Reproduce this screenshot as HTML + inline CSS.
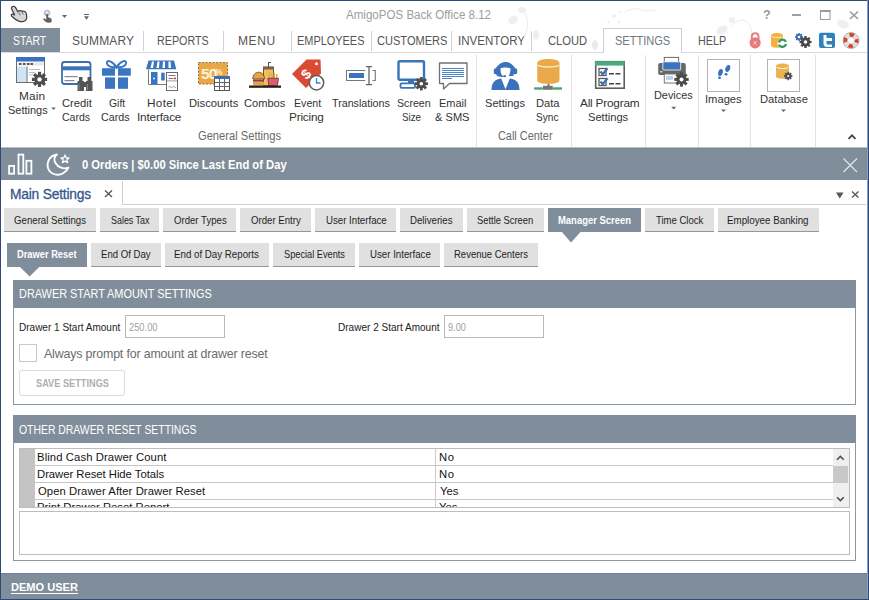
<!DOCTYPE html>
<html><head><meta charset="utf-8">
<style>
*{box-sizing:border-box;margin:0;padding:0}
html,body{width:869px;height:600px;overflow:hidden;background:#fff}
body{position:relative;font-family:"Liberation Sans", sans-serif;color:#222}
.a{position:absolute}
.t{position:absolute;white-space:pre;line-height:1;font-family:"Liberation Sans", sans-serif}
</style></head><body>
<!-- frame -->
<div class="a" style="left:0;top:0;width:869px;height:1px;background:#2e4a78"></div>
<div class="a" style="left:0;top:0;width:1px;height:600px;background:#2e4a78"></div>
<div class="a" style="left:867px;top:0;width:1px;height:600px;background:#8a9cbb"></div><div class="a" style="left:868px;top:0;width:1px;height:600px;background:#2e4a78"></div>
<div class="a" style="left:0;top:599px;width:869px;height:1px;background:#2e4a78"></div>
<!-- tab row -->
<div class="a" style="left:1px;top:28px;width:59px;height:24px;background:#808e9b"></div>
<div class="a" style="left:143px;top:31px;width:1px;height:20px;background:#c9d4e0"></div>
<div class="a" style="left:223px;top:31px;width:1px;height:20px;background:#c9d4e0"></div>
<div class="a" style="left:291px;top:31px;width:1px;height:20px;background:#c9d4e0"></div>
<div class="a" style="left:371px;top:31px;width:1px;height:20px;background:#c9d4e0"></div>
<div class="a" style="left:451px;top:31px;width:1px;height:20px;background:#c9d4e0"></div>
<div class="a" style="left:531px;top:31px;width:1px;height:20px;background:#c9d4e0"></div>
<div class="a" style="left:1px;top:52px;width:866px;height:1px;background:#dadada"></div>
<div class="a" style="left:603px;top:28px;width:79px;height:25px;background:#fff;border:1px solid #c6d1dc;border-bottom:none"></div>
<!-- ribbon separators -->
<div class="a" style="left:476px;top:55px;width:1px;height:92px;background:#e3e3e3"></div>
<div class="a" style="left:571px;top:55px;width:1px;height:92px;background:#e3e3e3"></div>
<div class="a" style="left:645px;top:55px;width:1px;height:92px;background:#e3e3e3"></div>
<div class="a" style="left:698px;top:55px;width:1px;height:92px;background:#e3e3e3"></div>
<div class="a" style="left:750px;top:55px;width:1px;height:92px;background:#e3e3e3"></div>
<div class="a" style="left:815px;top:55px;width:1px;height:92px;background:#e3e3e3"></div>
<div class="a" style="left:707px;top:59px;width:33px;height:33px;border:1px solid #b4b4b4"></div>
<div class="a" style="left:767px;top:59px;width:33px;height:33px;border:1px solid #b4b4b4"></div>
<!-- status bar -->
<div class="a" style="left:1px;top:147px;width:866px;height:1px;background:#b9c0c7"></div><div class="a" style="left:1px;top:148px;width:866px;height:32px;background:#808e9b;border-top:1px solid #7a8692"></div>
<!-- doc tab -->
<div class="a" style="left:122px;top:181px;width:1px;height:24px;background:#cfcfcf"></div>
<div class="a" style="left:122px;top:204px;width:744px;height:1px;background:#cfcfcf"></div>
<!-- buttons row 1 -->
<div class="a" style="left:4px;top:208px;width:92px;height:24px;background:#e0e0e0;border-bottom:1px solid #979797"></div>
<div class="a" style="left:100px;top:208px;width:59px;height:24px;background:#e0e0e0;border-bottom:1px solid #979797"></div>
<div class="a" style="left:163px;top:208px;width:73px;height:24px;background:#e0e0e0;border-bottom:1px solid #979797"></div>
<div class="a" style="left:240px;top:208px;width:71px;height:24px;background:#e0e0e0;border-bottom:1px solid #979797"></div>
<div class="a" style="left:315px;top:208px;width:81px;height:24px;background:#e0e0e0;border-bottom:1px solid #979797"></div>
<div class="a" style="left:400px;top:208px;width:63px;height:24px;background:#e0e0e0;border-bottom:1px solid #979797"></div>
<div class="a" style="left:467px;top:208px;width:77px;height:24px;background:#e0e0e0;border-bottom:1px solid #979797"></div>
<div class="a" style="left:548px;top:208px;width:93px;height:24px;background:#808e9b"></div>
<div class="a" style="left:645px;top:208px;width:69px;height:24px;background:#e0e0e0;border-bottom:1px solid #979797"></div>
<div class="a" style="left:718px;top:208px;width:101px;height:24px;background:#e0e0e0;border-bottom:1px solid #979797"></div>
<!-- buttons row 2 -->
<div class="a" style="left:7px;top:243px;width:80px;height:24px;background:#808e9b"></div>
<div class="a" style="left:91px;top:243px;width:70px;height:24px;background:#e0e0e0;border-bottom:1px solid #979797"></div>
<div class="a" style="left:165px;top:243px;width:104px;height:24px;background:#e0e0e0;border-bottom:1px solid #979797"></div>
<div class="a" style="left:273px;top:243px;width:82px;height:24px;background:#e0e0e0;border-bottom:1px solid #979797"></div>
<div class="a" style="left:359px;top:243px;width:81px;height:24px;background:#e0e0e0;border-bottom:1px solid #979797"></div>
<div class="a" style="left:444px;top:243px;width:94px;height:24px;background:#e0e0e0;border-bottom:1px solid #979797"></div>
<!-- group 1 -->
<div class="a" style="left:13px;top:280px;width:843px;height:28px;background:#808e9b"></div>
<div class="a" style="left:13px;top:307px;width:843px;height:98px;border:1px solid #8c98a3;border-top:none"></div>
<div class="a" style="left:125px;top:315px;width:100px;height:23px;border:1px solid #b8b8b8"></div>
<div class="a" style="left:444px;top:315px;width:100px;height:23px;border:1px solid #b8b8b8"></div>
<div class="a" style="left:19px;top:344px;width:18px;height:18px;border:1px solid #c8c8c8"></div>
<div class="a" style="left:19px;top:370px;width:106px;height:26px;border:1px solid #dcdcdc;border-radius:3px"></div>
<!-- group 2 -->
<div class="a" style="left:13px;top:415px;width:843px;height:28px;background:#808e9b"></div>
<div class="a" style="left:13px;top:442px;width:843px;height:119px;border:1px solid #8c98a3;border-top:none"></div>
<div class="a" style="left:19px;top:448px;width:831px;height:60px;border:1px solid #bdbdbd;overflow:hidden">
  <div class="a" style="left:0;top:0;width:15px;height:58px;background:#c4c4c4"></div>
  <div class="a" style="left:15px;top:16px;width:798px;height:1px;background:#c6c6c6"></div>
  <div class="a" style="left:15px;top:33px;width:798px;height:1px;background:#c6c6c6"></div>
  <div class="a" style="left:15px;top:50px;width:798px;height:1px;background:#c6c6c6"></div>
  <div class="a" style="left:415px;top:0;width:1px;height:58px;background:#cbcbcb"></div>
  <div class="a" style="left:813px;top:0;width:16px;height:58px;background:#efefef"></div>
  <div class="a" style="left:813px;top:17px;width:15px;height:17px;background:#c8c8c8"></div>
  <span class="t" style="left:17px;top:53px;font-size:11.3px;color:#141414">Print Drawer Reset Report</span>
  <span class="t" style="left:419px;top:53px;font-size:11.3px;color:#141414">Yes</span>
</div>
<div class="a" style="left:19px;top:511px;width:831px;height:44px;border:1px solid #bdbdbd"></div>
<!-- bottom bar -->
<div class="a" style="left:1px;top:573px;width:866px;height:26px;background:#808e9b;border-top:1px solid #6a82a8"></div>

<span class="t" style="left:346.4px;top:9px;font-size:12.5px;font-weight:400;color:#9d9d9d;letter-spacing:0px;transform:scaleX(0.9250);transform-origin:0 0;">AmigoPOS Back Office 8.12</span>
<span class="t" style="left:12.64px;top:35px;font-size:12px;font-weight:400;color:#fff;letter-spacing:0px;transform:scaleX(0.8649);transform-origin:0 0;">START</span>
<span class="t" style="left:72px;top:35px;font-size:12px;font-weight:400;color:#555555;letter-spacing:0.167px;">SUMMARY</span>
<span class="t" style="left:157.31px;top:35px;font-size:12px;font-weight:400;color:#555555;letter-spacing:0px;transform:scaleX(0.8947);transform-origin:0 0;">REPORTS</span>
<span class="t" style="left:238px;top:35px;font-size:12px;font-weight:400;color:#555555;letter-spacing:0.6px;">MENU</span>
<span class="t" style="left:297.49px;top:35px;font-size:12px;font-weight:400;color:#555555;letter-spacing:0px;transform:scaleX(0.9110);transform-origin:0 0;">EMPLOYEES</span>
<span class="t" style="left:376.9px;top:35px;font-size:12px;font-weight:400;color:#555555;letter-spacing:0px;transform:scaleX(0.9211);transform-origin:0 0;">CUSTOMERS</span>
<span class="t" style="left:457.74px;top:35px;font-size:12px;font-weight:400;color:#555555;letter-spacing:0px;transform:scaleX(0.9632);transform-origin:0 0;">INVENTORY</span>
<span class="t" style="left:547.6px;top:35px;font-size:12px;font-weight:400;color:#555555;letter-spacing:0px;transform:scaleX(0.9286);transform-origin:0 0;">CLOUD</span>
<span class="t" style="left:614.88px;top:35px;font-size:12px;font-weight:400;color:#6f7780;letter-spacing:0px;transform:scaleX(0.9186);transform-origin:0 0;">SETTINGS</span>
<span class="t" style="left:698.2px;top:35px;font-size:12px;font-weight:400;color:#555555;letter-spacing:0px;transform:scaleX(0.9000);transform-origin:0 0;">HELP</span>
<span class="t" style="left:19px;top:91px;font-size:11.8px;font-weight:400;color:#333;letter-spacing:0.133px;">Main</span>
<span class="t" style="left:7.6px;top:105px;font-size:11.8px;font-weight:400;color:#333;letter-spacing:0px;transform:scaleX(0.9302);transform-origin:0 0;">Settings</span>
<span class="t" style="left:61.8px;top:98px;font-size:11.8px;font-weight:400;color:#333;letter-spacing:0px;transform:scaleX(0.9500);transform-origin:0 0;">Credit</span>
<span class="t" style="left:61.8px;top:112px;font-size:11.8px;font-weight:400;color:#333;letter-spacing:0px;transform:scaleX(0.8935);transform-origin:0 0;">Cards</span>
<span class="t" style="left:108.7px;top:98px;font-size:11.8px;font-weight:400;color:#333;letter-spacing:0px;transform:scaleX(0.8842);transform-origin:0 0;">Gift</span>
<span class="t" style="left:101.3px;top:112px;font-size:11.8px;font-weight:400;color:#333;letter-spacing:0px;transform:scaleX(0.9097);transform-origin:0 0;">Cards</span>
<span class="t" style="left:147px;top:98px;font-size:11.8px;font-weight:400;color:#333;letter-spacing:0.325px;">Hotel</span>
<span class="t" style="left:137px;top:112px;font-size:11.8px;font-weight:400;color:#333;letter-spacing:-0.188px;">Interface</span>
<span class="t" style="left:188.65px;top:98px;font-size:11.8px;font-weight:400;color:#333;letter-spacing:0px;transform:scaleX(0.9529);transform-origin:0 0;">Discounts</span>
<span class="t" style="left:244.2px;top:98px;font-size:11.8px;font-weight:400;color:#333;letter-spacing:0px;transform:scaleX(0.9386);transform-origin:0 0;">Combos</span>
<span class="t" style="left:294.1px;top:98px;font-size:11.8px;font-weight:400;color:#333;letter-spacing:0px;transform:scaleX(0.9000);transform-origin:0 0;">Event</span>
<span class="t" style="left:289px;top:112px;font-size:11.8px;font-weight:400;color:#333;letter-spacing:-0.208px;">Pricing</span>
<span class="t" style="left:332.4px;top:98px;font-size:11.8px;font-weight:400;color:#333;letter-spacing:0px;transform:scaleX(0.9062);transform-origin:0 0;">Translations</span>
<span class="t" style="left:396.7px;top:98px;font-size:11.8px;font-weight:400;color:#333;letter-spacing:0px;transform:scaleX(0.9000);transform-origin:0 0;">Screen</span>
<span class="t" style="left:401.8px;top:112px;font-size:11.8px;font-weight:400;color:#333;letter-spacing:0px;transform:scaleX(0.8304);transform-origin:0 0;">Size</span>
<span class="t" style="left:439.47px;top:98px;font-size:11.8px;font-weight:400;color:#333;letter-spacing:0px;transform:scaleX(0.9286);transform-origin:0 0;">Email</span>
<span class="t" style="left:435.25px;top:112px;font-size:11.8px;font-weight:400;color:#333;letter-spacing:0px;transform:scaleX(0.9403);transform-origin:0 0;">&amp; SMS</span>
<span class="t" style="left:485.1px;top:98px;font-size:11.8px;font-weight:400;color:#333;letter-spacing:0px;transform:scaleX(0.9395);transform-origin:0 0;">Settings</span>
<span class="t" style="left:536.35px;top:98px;font-size:11.8px;font-weight:400;color:#333;letter-spacing:0px;transform:scaleX(0.9458);transform-origin:0 0;">Data</span>
<span class="t" style="left:535.5px;top:112px;font-size:11.8px;font-weight:400;color:#333;letter-spacing:0px;transform:scaleX(0.8577);transform-origin:0 0;">Sync</span>
<span class="t" style="left:580px;top:98px;font-size:11.8px;font-weight:400;color:#333;letter-spacing:-0.2px;">All Program</span>
<span class="t" style="left:588.1px;top:112px;font-size:11.8px;font-weight:400;color:#333;letter-spacing:0px;transform:scaleX(0.9419);transform-origin:0 0;">Settings</span>
<span class="t" style="left:653.58px;top:90px;font-size:11.8px;font-weight:400;color:#333;letter-spacing:0px;transform:scaleX(0.9220);transform-origin:0 0;">Devices</span>
<span class="t" style="left:704.95px;top:94px;font-size:11.8px;font-weight:400;color:#333;letter-spacing:0px;transform:scaleX(0.9474);transform-origin:0 0;">Images</span>
<span class="t" style="left:759.55px;top:94px;font-size:11.8px;font-weight:400;color:#333;letter-spacing:0px;transform:scaleX(0.9490);transform-origin:0 0;">Database</span>
<span class="t" style="left:198.2px;top:130px;font-size:12px;font-weight:400;color:#6a6a6a;letter-spacing:0px;transform:scaleX(0.9292);transform-origin:0 0;">General Settings</span>
<span class="t" style="left:498.2px;top:130px;font-size:12px;font-weight:400;color:#6a6a6a;letter-spacing:0px;transform:scaleX(0.9083);transform-origin:0 0;">Call Center</span>
<span class="t" style="left:82.2px;top:159px;font-size:12.2px;font-weight:700;color:#fff;letter-spacing:0px;transform:scaleX(0.9212);transform-origin:0 0;">0 Orders | $0.00 Since Last End of Day</span>
<span class="t" style="left:10px;top:188px;font-size:13.8px;font-weight:400;color:#36578b;letter-spacing:-0.208px;-webkit-text-stroke:0.3px #36578b;">Main Settings</span>
<span class="t" style="left:14.2px;top:216px;font-size:10.4px;font-weight:400;color:#1e1e1e;letter-spacing:0px;transform:scaleX(0.9299);transform-origin:0 0;">General Settings</span>
<span class="t" style="left:110.5px;top:216px;font-size:10.4px;font-weight:400;color:#1e1e1e;letter-spacing:0px;transform:scaleX(0.8578);transform-origin:0 0;">Sales Tax</span>
<span class="t" style="left:173.5px;top:216px;font-size:10.4px;font-weight:400;color:#1e1e1e;letter-spacing:0px;transform:scaleX(0.9246);transform-origin:0 0;">Order Types</span>
<span class="t" style="left:250.7px;top:216px;font-size:10.4px;font-weight:400;color:#1e1e1e;letter-spacing:0px;transform:scaleX(0.9259);transform-origin:0 0;">Order Entry</span>
<span class="t" style="left:325.5px;top:216px;font-size:10.4px;font-weight:400;color:#1e1e1e;letter-spacing:0px;transform:scaleX(0.9308);transform-origin:0 0;">User Interface</span>
<span class="t" style="left:409.57px;top:216px;font-size:10.4px;font-weight:400;color:#1e1e1e;letter-spacing:0px;transform:scaleX(0.9311);transform-origin:0 0;">Deliveries</span>
<span class="t" style="left:477.3px;top:216px;font-size:10.4px;font-weight:400;color:#1e1e1e;letter-spacing:0px;transform:scaleX(0.9000);transform-origin:0 0;">Settle Screen</span>
<span class="t" style="left:558.0px;top:216px;font-size:10.4px;font-weight:700;color:#fff;letter-spacing:0px;transform:scaleX(0.9088);transform-origin:0 0;">Manager Screen</span>
<span class="t" style="left:655.6px;top:216px;font-size:10.4px;font-weight:400;color:#1e1e1e;letter-spacing:0px;transform:scaleX(0.9173);transform-origin:0 0;">Time Clock</span>
<span class="t" style="left:727.36px;top:216px;font-size:10.4px;font-weight:400;color:#1e1e1e;letter-spacing:0px;transform:scaleX(0.9412);transform-origin:0 0;">Employee Banking</span>
<span class="t" style="left:17.3px;top:250px;font-size:10.4px;font-weight:700;color:#fff;letter-spacing:0px;transform:scaleX(0.8955);transform-origin:0 0;">Drawer Reset</span>
<span class="t" style="left:100.58px;top:250px;font-size:10.4px;font-weight:400;color:#1e1e1e;letter-spacing:0px;transform:scaleX(0.9245);transform-origin:0 0;">End Of Day</span>
<span class="t" style="left:173.76px;top:250px;font-size:10.4px;font-weight:400;color:#1e1e1e;letter-spacing:0px;transform:scaleX(0.9356);transform-origin:0 0;">End of Day Reports</span>
<span class="t" style="left:283.5px;top:250px;font-size:10.4px;font-weight:400;color:#1e1e1e;letter-spacing:0px;transform:scaleX(0.8870);transform-origin:0 0;">Special Events</span>
<span class="t" style="left:369.6px;top:250px;font-size:10.4px;font-weight:400;color:#1e1e1e;letter-spacing:0px;transform:scaleX(0.9323);transform-origin:0 0;">User Interface</span>
<span class="t" style="left:453.59px;top:250px;font-size:10.4px;font-weight:400;color:#1e1e1e;letter-spacing:0px;transform:scaleX(0.9137);transform-origin:0 0;">Revenue Centers</span>
<span class="t" style="left:18.61px;top:288px;font-size:12.2px;font-weight:400;color:#fff;letter-spacing:0px;transform:scaleX(0.8949);transform-origin:0 0;">DRAWER START AMOUNT SETTINGS</span>
<span class="t" style="left:18.57px;top:322px;font-size:10.8px;font-weight:400;color:#222;letter-spacing:0px;transform:scaleX(0.9269);transform-origin:0 0;">Drawer 1 Start Amount</span>
<span class="t" style="left:129.1px;top:322px;font-size:10.8px;font-weight:400;color:#a0a0a0;letter-spacing:0px;transform:scaleX(0.8636);transform-origin:0 0;">250.00</span>
<span class="t" style="left:337.77px;top:322px;font-size:10.8px;font-weight:400;color:#222;letter-spacing:0px;transform:scaleX(0.9296);transform-origin:0 0;">Drawer 2 Start Amount</span>
<span class="t" style="left:448.2px;top:322px;font-size:10.8px;font-weight:400;color:#a0a0a0;letter-spacing:0px;transform:scaleX(0.8476);transform-origin:0 0;">9.00</span>
<span class="t" style="left:44px;top:348px;font-size:12.4px;font-weight:400;color:#6b6b6b;letter-spacing:-0.162px;">Always prompt for amount at drawer reset</span>
<span class="t" style="left:35.5px;top:379px;font-size:10px;font-weight:700;color:#b0b0b0;letter-spacing:0px;transform:scaleX(0.9203);transform-origin:0 0;">SAVE SETTINGS</span>
<span class="t" style="left:18.75px;top:424px;font-size:12.2px;font-weight:400;color:#fff;letter-spacing:0px;transform:scaleX(0.8534);transform-origin:0 0;">OTHER DRAWER RESET SETTINGS</span>
<span class="t" style="left:37px;top:452px;font-size:11.3px;font-weight:400;color:#141414;letter-spacing:0.091px;">Blind Cash Drawer Count</span>
<span class="t" style="left:37px;top:469px;font-size:11.3px;font-weight:400;color:#141414;letter-spacing:-0.033px;">Drawer Reset Hide Totals</span>
<span class="t" style="left:38px;top:486px;font-size:11.3px;font-weight:400;color:#141414;letter-spacing:0.052px;">Open Drawer After Drawer Reset</span>
<span class="t" style="left:439px;top:452px;font-size:11.3px;font-weight:400;color:#141414;letter-spacing:0.6px;">No</span>
<span class="t" style="left:439px;top:469px;font-size:11.3px;font-weight:400;color:#141414;letter-spacing:0.6px;">No</span>
<span class="t" style="left:440px;top:486px;font-size:11.3px;font-weight:400;color:#141414;letter-spacing:0px;">Yes</span>
<span class="t" style="left:11.25px;top:581px;font-size:11.6px;font-weight:700;color:#fff;letter-spacing:0px;text-decoration:underline;text-underline-offset:2px;transform:scaleX(0.9536);transform-origin:0 0;">DEMO USER</span>
<svg class="a" style="left:0;top:0" width="869" height="600" viewBox="0 0 869 600">
<!-- watermark floral (faint) -->
<g fill="#efefef" stroke="none">
 <ellipse cx="513" cy="20" rx="5" ry="4" transform="rotate(-30 513 20)"/>
 <ellipse cx="522" cy="10" rx="4" ry="3"/>
 <ellipse cx="536" cy="35" rx="3" ry="5"/>
 <ellipse cx="595" cy="45" rx="3" ry="5" fill="#eaeaea"/>
 <circle cx="614" cy="16" r="2"/><circle cx="619" cy="22" r="1.5"/><circle cx="609" cy="22" r="1.5"/><circle cx="620" cy="12" r="1.2"/>
 <ellipse cx="722" cy="30" rx="6" ry="4" transform="rotate(-30 722 30)"/>
 <ellipse cx="732" cy="20" rx="3" ry="3"/>
 <ellipse cx="843" cy="24" rx="6" ry="4" transform="rotate(20 843 24)"/>
</g>
<g fill="none" stroke="#ebebeb" stroke-width="1">
 <path d="M524 12 C 530 20, 528 30, 523 40"/>
 <path d="M625 12 C 635 4, 645 14, 656 10"/>
 <path d="M730 27 C 740 16, 750 18, 752 34"/>
</g>
<!-- title bar hand icon -->
<path d="M11.5 8.5 C 11 6.3, 14.5 5.6, 15.6 7.6 L 17.8 11.6 C 19.2 10.6, 21 10.6, 22 11.2 C 24 10.6, 26 11.8, 26.4 14 L 26.8 17.5 C 26.4 20.2, 24 22, 20.5 21.6 C 18 21.4, 15 19.2, 11.8 16.2 C 10.6 15, 11.6 13.8, 13.2 14.4 L 14.6 15 Z" fill="#d6d6d6" stroke="#3a3a3a" stroke-width="1.2" stroke-linejoin="round"/>
<path d="M18.5 12.5 L 20.3 15.2 M21.8 11.8 L 23.3 14.4" stroke="#555" stroke-width="0.9" fill="none"/>
<!-- touch icon -->
<circle cx="47" cy="13" r="2.9" fill="#c3cbdc" stroke="#aab5cc" stroke-width="0.8"/><circle cx="47" cy="12.6" r="1.3" fill="#e8ecf3"/>
<path d="M46.2 14 L 48 14 L 48.3 17.5 C 50.5 17.5, 52 18.5, 51.8 21 C 51.6 22.5, 50 22.8, 48.5 22.8 C 46.5 22.8, 44.5 21, 43 19 L 44 18.2 L 46.2 19.5 Z" fill="#626262"/>
<path d="M62 15 L 67 15 L 64.5 18 Z" fill="#666"/>
<rect x="84" y="14" width="5" height="1" fill="#666"/>
<path d="M84 16.3 L 89 16.3 L 86.5 19.8 Z" fill="#666"/>
<!-- window buttons -->
<text x="763" y="19.2" font-family="Liberation Sans" font-weight="bold" font-size="12.5" fill="#9a9a9a">?</text>
<rect x="792" y="14" width="9" height="2" fill="#a0a0a0"/>
<rect x="820.5" y="10.5" width="9.5" height="9" fill="none" stroke="#9a9a9a" stroke-width="1"/>
<rect x="820" y="10" width="10.5" height="2" fill="#9a9a9a"/>
<path d="M850 11.5 L 858 19 M858 11.5 L 850 19" stroke="#9a9a9a" stroke-width="1.6"/>
<!-- tab row icons -->
<path d="M751.8 39 L 751.8 36.5 C 751.8 32, 758.5 32, 758.5 36.5 L 758.5 39" fill="none" stroke="#e58080" stroke-width="2"/>
<circle cx="755.1" cy="42.8" r="5.6" fill="#e77b7b"/>
<path d="M753.5 41.3 L 756.7 44.3 M756.7 41.3 L 753.5 44.3" stroke="#fbe0e0" stroke-width="0.9"/>
<!-- db sync -->
<path d="M771 35.5 C 771 32, 783 32, 783 35.5 L 783 45.5 C 783 48.5, 771 48.5, 771 45.5 Z" fill="#f4b13d"/>
<path d="M771.5 36.3 C 773 38, 781 38, 782.5 36.3" stroke="#fde9bb" stroke-width="1" fill="none"/>
<circle cx="782.5" cy="43.2" r="5" fill="#ffffff"/>
<path d="M779 42.5 A 3.7 3.7 0 0 1 786 41.8 M786 44 A 3.7 3.7 0 0 1 779 44.6" fill="none" stroke="#2e9a5a" stroke-width="2.2"/>
<!-- gears -->
<g fill="#3b6fb6"><circle cx="799" cy="37" r="3"/>
<rect x="798.2" y="33" width="1.6" height="8"/><rect x="795" y="36.2" width="8" height="1.6"/>
<rect x="798.2" y="33" width="1.6" height="8" transform="rotate(45 799 37)"/><rect x="795" y="36.2" width="8" height="1.6" transform="rotate(45 799 37)"/></g>
<circle cx="799" cy="37" r="1.2" fill="#fff"/>
<g fill="#4a4a4a"><circle cx="805.5" cy="42" r="4.6"/>
<rect x="804.3" y="36" width="2.4" height="12"/><rect x="799.5" y="40.8" width="12" height="2.4"/>
<rect x="804.3" y="36" width="2.4" height="12" transform="rotate(45 805.5 42)"/><rect x="799.5" y="40.8" width="12" height="2.4" transform="rotate(45 805.5 42)"/></g>
<circle cx="805.5" cy="42" r="1.8" fill="#fff"/>
<!-- twitter -->
<rect x="819" y="32.8" width="16" height="15.2" rx="2" fill="#2f82c0"/>
<path d="M823.5 35 L 826.5 35 L 826.5 38 L 832 38 L 832 41 L 826.5 41 L 826.5 43 C 826.5 44.2, 827 44.5, 828 44.5 L 832 44.5 L 832 47 L 827 47 C 824.8 47, 823.5 45.8, 823.5 43.5 Z" fill="#fff"/>
<!-- lifebuoy -->
<circle cx="851" cy="40.5" r="7.9" fill="#fff" stroke="#8a8a8a" stroke-width="0.8"/>
<circle cx="851" cy="40.5" r="5.6" fill="none" stroke="#e0e0e0" stroke-width="3.8"/>
<circle cx="851" cy="40.5" r="5.6" fill="none" stroke="#d8432c" stroke-width="3.8" stroke-dasharray="4.4 4.4" stroke-dashoffset="2.2"/>
<circle cx="851" cy="40.5" r="3.4" fill="none" stroke="#b0b0b0" stroke-width="0.5"/>
<!-- RIBBON ICONS -->
<!-- main settings -->
<rect x="16.5" y="57.5" width="28" height="25" fill="#fff" stroke="#6d6d6d" stroke-width="1"/>
<rect x="16" y="57" width="29" height="4.5" fill="#3a73bd"/>
<rect x="17" y="62.5" width="27" height="3" fill="#e8e8e8"/>
<g fill="#555"><rect x="19" y="63" width="2.5" height="2"/><rect x="23" y="63" width="2.5" height="2"/><rect x="27" y="63" width="2.5" height="2"/><rect x="30.5" y="63" width="2.5" height="2"/></g>
<rect x="17" y="66.5" width="9.5" height="15.5" fill="#cfe3f6"/>
<rect x="26.5" y="66.5" width="1" height="15.5" fill="#6d6d6d"/>
<g fill="#aaa"><rect x="29" y="69" width="11" height="0.8"/><rect x="29" y="72" width="6" height="0.8"/><rect x="29" y="74.5" width="4" height="0.8"/></g>
<g fill="#4d4d4d"><circle cx="39.5" cy="79.4" r="5.2"/>
<rect x="37.9" y="71.8" width="3.2" height="15.2"/><rect x="31.9" y="77.8" width="15.2" height="3.2"/>
<rect x="37.9" y="71.8" width="3.2" height="15.2" transform="rotate(45 39.5 79.4)"/><rect x="31.9" y="77.8" width="15.2" height="3.2" transform="rotate(45 39.5 79.4)"/></g>
<circle cx="39.5" cy="79.4" r="2.2" fill="#fff"/>
<!-- credit cards -->
<rect x="62" y="62" width="28.5" height="22" rx="2.5" fill="#fff" stroke="#3d6eae" stroke-width="1.8"/>
<rect x="62" y="66.3" width="28.5" height="4" fill="#3c72b8"/>
<rect x="64.5" y="76" width="13" height="1.2" fill="#8a8a8a"/><rect x="64.5" y="80" width="10" height="1.2" fill="#8a8a8a"/>
<g fill="#555"><rect x="77.5" y="81" width="6.5" height="10"/><rect x="86" y="81" width="6.5" height="10"/><rect x="79" y="77" width="3.5" height="5"/><rect x="87.5" y="77" width="3.5" height="5"/><rect x="83" y="82" width="4" height="5"/></g>
<g fill="#888"><rect x="78.5" y="84" width="1" height="6"/><rect x="87" y="84" width="1" height="6"/></g>
<!-- gift -->
<path d="M116.5 67.5 C 113 61, 106 59, 107 63.5 C 107.8 66.5, 112 67.5, 116.5 67.5 C 121 67.5, 125.2 66.5, 126 63.5 C 127 59, 120 61, 116.5 67.5 Z" fill="none" stroke="#3a75bf" stroke-width="2"/>
<rect x="102" y="68.2" width="13" height="7.5" fill="#3a75bf"/><rect x="118" y="68.2" width="12.8" height="7.5" fill="#3a75bf"/>
<rect x="105" y="77.4" width="10" height="11.4" fill="#3a75bf"/><rect x="118" y="77.4" width="10" height="11.4" fill="#3a75bf"/>
<!-- hotel -->
<path d="M146 69.2 L 148.5 60.5 L 174 60.5 L 176.3 69.2 Z" fill="#3a75bf"/>
<g fill="#fff"><path d="M150.5 68 L 152 61.5 L 154 61.5 L 153 68 Z"/><path d="M156.5 68 L 157.5 61.5 L 159.5 61.5 L 159 68 Z"/><path d="M162.5 68 L 163 61.5 L 165 61.5 L 165 68 Z"/><path d="M168.5 68 L 168.5 61.5 L 170.5 61.5 L 171 68 Z"/></g>
<path d="M148.5 69.5 L 148.5 84.5 L 166.5 84.5" fill="none" stroke="#7a7a7a" stroke-width="1"/>
<rect x="151" y="72" width="6.5" height="12.5" fill="#3a75bf"/><circle cx="154" cy="78.5" r="0.9" fill="#fff"/>
<rect x="161.2" y="72.7" width="3.5" height="7.8" fill="#3a75bf"/>
<rect x="166.5" y="72.5" width="11" height="18" fill="#fff" stroke="#6a6a6a" stroke-width="1"/>
<g fill="#666"><rect x="168.5" y="75" width="7" height="0.9"/><rect x="168.5" y="78" width="5" height="0.9"/><rect x="168.5" y="81" width="0.9" height="0"/></g>
<rect x="174" y="77.6" width="2" height="1.6" fill="#d04040"/>
<rect x="167" y="80.5" width="10" height="0.8" fill="#888"/>
<path d="M168.5 87 q1 -1.5 2 0 q1 1.5 2 0 q1 -1.5 2 0 q1 1.5 1.5 0" stroke="#777" stroke-width="0.8" fill="none"/>
<!-- discounts -->
<rect x="198.5" y="62.5" width="29" height="21.5" fill="#e8a847" stroke="#8c7245" stroke-width="1" stroke-dasharray="2 1.5"/>
<text x="201" y="78.5" font-family="Liberation Sans" font-weight="bold" font-size="15.5" fill="#fff3da" letter-spacing="-0.8">50</text>
<text x="215" y="75" font-family="Liberation Sans" font-weight="bold" font-size="8.5" fill="#fff3da">%</text>
<rect x="214.5" y="76.5" width="15" height="14" fill="#fff" stroke="#555" stroke-width="1"/>
<rect x="214" y="76" width="16" height="3" fill="#3a6fb5"/>
<g fill="#666"><rect x="219" y="79" width="1" height="11"/><rect x="224" y="79" width="1" height="11"/><rect x="215" y="82" width="14" height="1"/><rect x="215" y="86" width="14" height="1"/></g>
<!-- combos -->
<rect x="263.5" y="67.3" width="10" height="18.5" fill="#f0c060" stroke="#6a5040" stroke-width="1"/>
<rect x="263" y="66.5" width="11" height="3" fill="#7a6050"/>
<rect x="268" y="62" width="1" height="5" fill="#555"/><rect x="268" y="62" width="3" height="1" fill="#555"/>
<path d="M252.8 79 C 252.8 70, 264.5 70, 264.5 79 Z" fill="#e7a33f" stroke="#5a4030" stroke-width="0.8"/>
<rect x="253" y="79.5" width="11" height="2.2" fill="#9b3a3a"/>
<rect x="253" y="82" width="11" height="3.5" fill="#e7a33f"/>
<g fill="#d8b040"><rect x="268.5" y="72.5" width="1.5" height="7"/><rect x="271" y="73.5" width="1.5" height="6"/><rect x="273.5" y="72.8" width="1.5" height="7"/><rect x="276" y="74" width="1.5" height="6"/></g>
<path d="M267.8 78.3 L 278.5 78.3 L 277.5 85.5 L 268.8 85.5 Z" fill="#e05a70" stroke="#6a3040" stroke-width="0.8"/>
<rect x="249" y="85.5" width="32" height="2.3" fill="#2a1f24"/>
<!-- event pricing -->
<path d="M306.5 59.5 L 320.5 59.5 L 321 73.5 L 306 88 L 292 74 Z" fill="#db4a33"/>
<circle cx="316.5" cy="63.8" r="1.5" fill="#fff"/>
<text x="306" y="79" text-anchor="middle" font-family="Liberation Sans" font-weight="bold" font-size="14" fill="#fff" transform="rotate(-45 306 74)">$</text>
<circle cx="316.5" cy="82.7" r="7.2" fill="#fff" stroke="#5f5f5f" stroke-width="1.5"/>
<path d="M316.5 78 L 316.5 83 L 320.5 83" fill="none" stroke="#3d7fd0" stroke-width="1.3"/>
<!-- translations -->
<path d="M365.3 70.5 L 346.5 70.5 L 346.5 80.5 L 365.3 80.5 M372.5 70.5 L 375.3 70.5 L 375.3 80.5 L 372.5 80.5" fill="none" stroke="#777" stroke-width="1.1"/>
<rect x="349" y="73" width="15" height="5" fill="#3a72bb"/>
<path d="M369 67 L 369 84.3 M366 66.6 L 372 66.6 M366 84.6 L 372 84.6" stroke="#666" stroke-width="1.3"/>
<!-- screen size -->
<rect x="398.5" y="61.2" width="25.5" height="18.5" rx="1.5" fill="#fff" stroke="#3a72bb" stroke-width="2.4"/>
<rect x="408" y="80" width="6" height="3" fill="#3a72bb"/>
<rect x="400.5" y="83.3" width="14.5" height="4.5" rx="1" fill="none" stroke="#3a72bb" stroke-width="1.8"/>
<g fill="#4d4d4d"><circle cx="421.3" cy="83.7" r="4.6"/>
<rect x="419.9" y="77" width="2.8" height="13.4"/><rect x="414.6" y="82.3" width="13.4" height="2.8"/>
<rect x="419.9" y="77" width="2.8" height="13.4" transform="rotate(45 421.3 83.7)"/><rect x="414.6" y="82.3" width="13.4" height="2.8" transform="rotate(45 421.3 83.7)"/></g>
<circle cx="421.3" cy="83.7" r="1.8" fill="#fff"/>
<!-- email -->
<path d="M439.5 63 L 467 63 L 467 83.5 L 449.5 83.5 L 443.5 89 L 443.5 83.5 L 439.5 83.5 Z" fill="#fff" stroke="#707070" stroke-width="1.3" stroke-linejoin="round"/>
<g fill="#4a84c6"><rect x="442" y="68" width="22" height="1"/><rect x="442" y="70" width="22" height="1"/><rect x="442" y="72" width="22" height="1"/><rect x="442" y="74" width="22" height="1"/><rect x="442" y="76" width="22" height="1"/><rect x="442" y="78" width="10" height="1"/></g>
<!-- call center -->
<path d="M495.2 74 A 10.3 10.8 0 0 1 515.8 74" fill="none" stroke="#3a72bb" stroke-width="1.5"/>
<path d="M497.5 76 C 496.5 66.5, 499.5 62, 505.5 62 C 511.5 62, 514.5 66.5, 513.5 76 Z" fill="#3a72bb"/>
<path d="M500.6 68.3 C 503 67.2, 508 67.2, 510.4 68.3 C 510.8 74.2, 508.5 77.6, 505.5 77.6 C 502.5 77.6, 500.2 74.2, 500.6 68.3 Z" fill="#fff"/>
<rect x="493.8" y="68.3" width="4.6" height="6" rx="2" fill="#3a72bb"/>
<rect x="512.6" y="68.3" width="4.6" height="6" rx="2" fill="#3a72bb"/>
<path d="M496.5 74 C 497.5 76, 500.5 76.6, 504.3 76.2" fill="none" stroke="#3a72bb" stroke-width="1.2"/>
<circle cx="505" cy="76.2" r="1.1" fill="#3a72bb"/>
<path d="M491.5 90 C 491.5 83, 494 79.6, 501.2 78.4 L 505.5 89.2 L 509.8 78.4 C 517 79.6, 519.5 83, 519.5 90 Z" fill="#3a72bb"/>
<!-- data sync -->
<path d="M537.2 63 C 537.2 57.5, 559.5 57.5, 559.5 63 L 559.5 80.5 C 559.5 85, 537.2 85, 537.2 80.5 Z" fill="#eaaa4c"/>
<path d="M538 65.3 C 541 67.5, 556 67.5, 558.8 65.3" fill="none" stroke="#fff5dc" stroke-width="1.3"/>
<rect x="547.5" y="84" width="2" height="2" fill="#777"/>
<rect x="543" y="85.8" width="9.8" height="4" fill="#777"/>
<rect x="534.2" y="87.3" width="8.5" height="2.4" fill="#4aa37a"/><rect x="553" y="87.3" width="9" height="2.4" fill="#4aa37a"/>
<!-- all program settings -->
<rect x="595.7" y="61.7" width="28.5" height="26.5" fill="#fff" stroke="#5e5e5e" stroke-width="1.6"/>
<rect x="595" y="61.2" width="29.7" height="4.4" fill="#4daa7d"/>
<rect x="599" y="68.5" width="7" height="7" fill="#fff" stroke="#5a5a5a" stroke-width="1.3"/>
<rect x="599" y="78.5" width="7" height="7" fill="#fff" stroke="#5a5a5a" stroke-width="1.3"/>
<path d="M600.5 71.5 L 602.8 74.3 L 607.5 68.3 M600.5 81.5 L 602.8 84.3 L 607.5 78.3" fill="none" stroke="#3a6fb0" stroke-width="2.2"/>
<g fill="#444"><rect x="609" y="73" width="5" height="1.5"/><rect x="615.5" y="73" width="5" height="1.5"/><rect x="609" y="83" width="5" height="1.5"/><rect x="615.5" y="83" width="5" height="1.5"/></g>
<!-- devices printer -->
<rect x="664.3" y="57.4" width="14.3" height="6" fill="#fff" stroke="#6a6a6a" stroke-width="1"/>
<rect x="658.2" y="63" width="27.6" height="12" rx="2" fill="#666"/>
<rect x="662.8" y="61.8" width="17.9" height="8.2" rx="1" fill="#3b73bc" stroke="#fff" stroke-width="0.8"/>
<rect x="660" y="71.3" width="2.5" height="1" fill="#fff"/>
<rect x="664.3" y="74" width="13" height="9" fill="#fff" stroke="#777" stroke-width="1"/>
<rect x="666" y="76.5" width="7" height="0.8" fill="#5a90cf"/><rect x="666" y="78.5" width="7" height="0.8" fill="#5a90cf"/>
<g fill="#4d4d4d"><circle cx="681.5" cy="79.4" r="5"/>
<rect x="680" y="72.2" width="3" height="14.4"/><rect x="674.3" y="77.9" width="14.4" height="3"/>
<rect x="680" y="72.2" width="3" height="14.4" transform="rotate(45 681.5 79.4)"/><rect x="674.3" y="77.9" width="14.4" height="3" transform="rotate(45 681.5 79.4)"/></g>
<circle cx="681.5" cy="79.4" r="2" fill="#fff"/>
<!-- images footprints -->
<ellipse cx="720.5" cy="72.5" rx="2.3" ry="3.5" fill="#3a72bb" transform="rotate(15 720.5 72.5)"/>
<ellipse cx="719.5" cy="77.8" rx="1.5" ry="1.3" fill="#3a72bb"/>
<ellipse cx="727.8" cy="68.5" rx="2.3" ry="3.6" fill="#3a72bb" transform="rotate(20 727.8 68.5)"/>
<ellipse cx="726" cy="74.3" rx="1.5" ry="1.3" fill="#3a72bb"/>
<!-- database -->
<path d="M776 66 C 776 62.5, 789 62.5, 789 66 L 789 76.5 C 789 79.5, 776 79.5, 776 76.5 Z" fill="#ecb451"/>
<path d="M776.5 67.3 C 779 69, 786 69, 788.5 67.3" fill="none" stroke="#fff3d8" stroke-width="1"/>
<g fill="#4d4d4d"><circle cx="788.2" cy="76" r="2.8"/>
<rect x="787.3" y="71.8" width="1.8" height="8.4"/><rect x="784" y="75.1" width="8.4" height="1.8"/>
<rect x="787.3" y="71.8" width="1.8" height="8.4" transform="rotate(45 788.2 76)"/><rect x="784" y="75.1" width="8.4" height="1.8" transform="rotate(45 788.2 76)"/></g>
<circle cx="788.2" cy="76" r="1.1" fill="#fff"/>
<!-- ribbon dropdown arrows -->
<g fill="#666"><path d="M51.3 107.5 L 55.8 107.5 L 53.55 110 Z"/><path d="M671.3 106.8 L 676.2 106.8 L 673.75 109.5 Z"/><path d="M721 109.5 L 726 109.5 L 723.5 112 Z"/><path d="M781 109.5 L 786 109.5 L 783.5 112 Z"/></g>
<path d="M848.5 138.8 L 852 135.3 L 855.5 138.8" fill="none" stroke="#444" stroke-width="1.8"/>

<!-- status bar icons -->
<g fill="none" stroke="#fff" stroke-width="1.8">
<rect x="9.1" y="165.9" width="5" height="7.8"/>
<rect x="18.5" y="154.6" width="4.8" height="19.1"/>
<rect x="26.4" y="160.8" width="5" height="12.9"/>
</g>
<path d="M57 154.5 C 49 155.5, 46.5 163, 48 168 C 50 174.5, 58 176.5, 63.5 173 C 66 171.5, 67.5 169.5, 68.5 167.5 C 63.5 169.5, 58 167.5, 55.5 163 C 53.5 159.5, 54.5 156.5, 57 154.5 Z" fill="none" stroke="#fff" stroke-width="1.8" stroke-linejoin="round"/>
<path d="M65 155 L 66.2 157.8 L 69 158 L 66.9 159.8 L 67.6 162.6 L 65 161.1 L 62.4 162.6 L 63.1 159.8 L 61 158 L 63.8 157.8 Z" fill="none" stroke="#fff" stroke-width="1.3" stroke-linejoin="round"/>
<path d="M843.5 158.5 L 857 172 M857 158.5 L 843.5 172" stroke="#e4e8ec" stroke-width="1.1"/>
<!-- doc tab icons -->
<path d="M105 190.5 L 112 197 M112 190.5 L 105 197" stroke="#555" stroke-width="1.3"/>
<path d="M836 192.5 L 843.5 192.5 L 839.75 198.5 Z" fill="#555"/>
<path d="M852 191.5 L 858.5 197.5 M858.5 191.5 L 852 197.5" stroke="#555" stroke-width="1.3"/>
<!-- selected button arrows -->
<path d="M562 232 L 580.5 232 L 571 242.5 Z" fill="#808e9b"/>
<path d="M20 267 L 39.2 267 L 29.6 276.6 Z" fill="#808e9b"/>
<!-- scrollbar chevrons -->
<path d="M837 459.8 L 840.4 456.4 L 843.8 459.8" fill="none" stroke="#505050" stroke-width="1.6"/>
<path d="M837 497.2 L 840.4 500.6 L 843.8 497.2" fill="none" stroke="#505050" stroke-width="1.6"/>
</svg>

</body></html>
